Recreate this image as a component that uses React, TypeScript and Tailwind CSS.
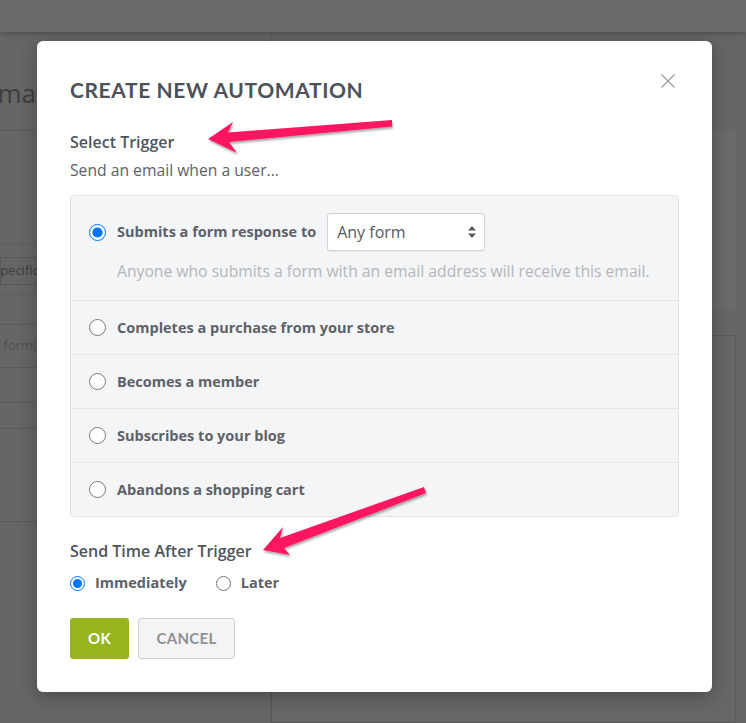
import React from "react";

function Row({ label }: { label: string }) {
  return (
    <div className="border-t border-[#e3e5e8]">
      <div className="h-[53px] flex items-center pl-[18px]">
        <input type="radio" name="trigger" className="m-0 w-[17px] h-[17px]" />
        <span className="ml-[11px] text-[14.5px] font-bold text-[#5d6168]">{label}</span>
      </div>
    </div>
  );
}

export default function App() {
  return (
    <div className="relative w-[746px] h-[723px] overflow-hidden bg-[#666666] font-['Open_Sans',sans-serif]">
      {/* background page */}
      <div className="relative z-10 h-[32px] bg-[#696969] shadow-[0_2px_5px_rgba(0,0,0,0.22)]" />
      <div className="flex h-[691px]">
        <div className="w-[271px] shrink-0 border-r border-[#5b5b5b] flex flex-col overflow-hidden">
          <div className="h-[99px] border-b border-[#5b5b5b] pt-[48px]">
            <div className="ml-[-17px] text-[26px] leading-[26px] text-[#3e3e3e] whitespace-nowrap">Email</div>
          </div>
          <div className="h-[113px] border-b border-[#5e5e5e]" />
          <div className="mt-[13px] h-[28px] border border-[#585858] flex items-center text-[13px] text-[#3e3e3e]">
            <span className="ml-[-8px] whitespace-nowrap">Specific</span>
          </div>
          <div className="mt-[9px] border-b border-[#5e5e5e]" />
          <div className="mt-[29px] h-[44px] border-y border-[#5b5b5b] flex items-center text-[13px] text-[#525252]">
            <span className="ml-[-8px] whitespace-nowrap">d form(s)</span>
          </div>
          <div className="mt-[34px] border-b border-[#5b5b5b]" />
          <div className="mt-[25px] border-b border-[#5b5b5b]" />
          <div className="mt-[92px] border-b border-[#5b5b5b]" />
        </div>
        <div className="flex-1 pr-[10px] flex flex-col">
          <div className="mt-[98px] h-[180px] bg-[#6a6a6a]" />
          <div className="mt-[25px] flex-1 border border-[#5a5a5a] bg-[#676767]" />
        </div>
      </div>

      {/* modal overlay */}
      <div className="absolute inset-0 pt-[41px] pl-[37px]">
        <div className="relative w-[675px] bg-white rounded-[6px] shadow-[0_4px_18px_rgba(0,0,0,0.3)] px-[33px] pt-[35px] pb-[33px]">
          <button className="absolute top-[33px] right-[37px] w-[14px] h-[14px]">
            <svg width="14" height="14" viewBox="0 0 14 14" fill="none" stroke="#9c9c9c" strokeWidth="1.3">
              <path d="M0.5 0.5 L13.5 13.5 M13.5 0.5 L0.5 13.5" />
            </svg>
          </button>
          <div className="h-[28px] leading-[28px] text-[21px] font-bold font-['Lato',sans-serif] text-[#4d5259] tracking-[0.6px]">
            CREATE NEW AUTOMATION
          </div>
          <div className="mt-[26px] h-[24px] leading-[24px] text-[16px] font-semibold text-[#50555b]">Select Trigger</div>
          <div className="mt-[4px] h-[24px] leading-[24px] text-[15.7px] text-[#5d6166]">Send an email when a user...</div>

          <div className="mt-[13px] border border-[#e1e3e6] rounded-[4px] bg-[#f4f5f7]">
            <div className="pt-[17px] pb-[18px]">
              <div className="h-[38px] flex items-center pl-[18px]">
                <input type="radio" name="trigger" defaultChecked className="m-0 w-[17px] h-[17px]" />
                <span className="ml-[11px] text-[14.5px] font-bold text-[#5d6168]">Submits a form response to</span>
                <div className="ml-[11px] w-[158px] h-[38px] bg-white border border-[#cfd1d4] rounded-[3px] flex items-center justify-between pl-[9px] pr-[8px] shadow-[0_1px_1px_rgba(0,0,0,0.04)]">
                  <span className="text-[16px] text-[#555a60]">Any form</span>
                  <svg width="8" height="12" viewBox="0 0 8 12" fill="#555a60">
                    <path d="M4 0 L8 4.5 L0 4.5 Z M0 7.5 L8 7.5 L4 12 Z" />
                  </svg>
                </div>
              </div>
              <div className="mt-[9px] pl-[46px] leading-[22px] text-[15.7px] text-[#b3b6ba] whitespace-nowrap">
                Anyone who submits a form with an email address will receive this email.
              </div>
            </div>
            <Row label="Completes a purchase from your store" />
            <Row label="Becomes a member" />
            <Row label="Subscribes to your blog" />
            <Row label="Abandons a shopping cart" />
          </div>

          <div className="mt-[22px] h-[24px] leading-[24px] text-[16px] font-semibold text-[#50555b]">Send Time After Trigger</div>
          <div className="mt-[10px] h-[20px] flex items-center">
            <input type="radio" name="when" defaultChecked className="m-0 w-[15px] h-[15px]" />
            <span className="ml-[10px] text-[14.5px] font-bold text-[#5d6168]">Immediately</span>
            <input type="radio" name="when" className="ml-[29px] m-0 w-[15px] h-[15px]" />
            <span className="ml-[10px] text-[14.5px] font-bold text-[#5d6168]">Later</span>
          </div>

          <div className="mt-[25px] flex gap-[9px]">
            <button className="w-[59px] h-[41px] rounded-[3px] bg-[#96b41b] text-white text-[15px] font-bold font-['Lato',sans-serif] tracking-[0.3px]">OK</button>
            <button className="w-[97px] h-[41px] rounded-[3px] bg-[#f4f4f4] border border-[#cfcfcf] text-[#8c9198] text-[15px] font-bold font-['Lato',sans-serif] tracking-[0.3px]">CANCEL</button>
          </div>
        </div>
      </div>

      {/* annotation arrows */}
      <svg className="absolute inset-0 pointer-events-none" width="746" height="723" viewBox="0 0 746 723">
        <defs>
          <filter id="sh" x="-20%" y="-50%" width="140%" height="200%">
            <feDropShadow dx="1" dy="2" stdDeviation="1.2" floodColor="#000" floodOpacity="0.35" />
          </filter>
        </defs>
        <polygon
          filter="url(#sh)"
          fill="#ff1560"
          points="208,139 233,122 228,132.5 392,120 392,126.5 229,142 237,153"
        />
        <polygon
          filter="url(#sh)"
          fill="#ff1560"
          points="263,550 283,527 280,538 424,487 426,493 284,548 290,555"
        />
      </svg>
    </div>
  );
}
